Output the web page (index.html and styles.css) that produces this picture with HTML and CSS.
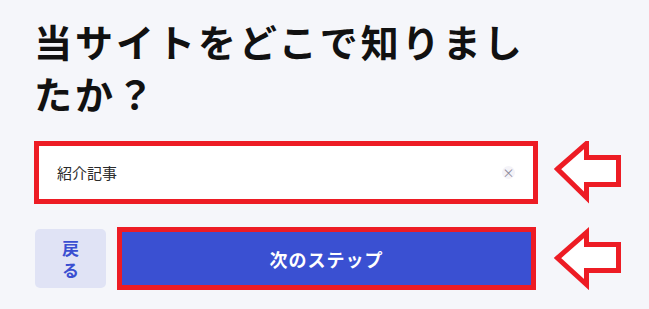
FILE: index.html
```html
<!DOCTYPE html>
<html lang="ja">
<head>
    <meta charset="UTF-8">
    <meta name="viewport" content="width=device-width, initial-scale=1.0">
    <title>当サイトをどこで知りましたか？</title>
    <link rel="stylesheet" href="styles.css">
</head>
<body>
    <main class="survey">
        <h1 class="question">当サイトをどこで知りましたか？</h1>

        <div class="row">
            <div class="select-field">
                <span class="select-value">紹介記事</span>
                <span class="clear-btn">×</span>
            </div>
            <svg class="pointer" width="80" height="63" viewBox="0 0 80 63">
                <path d="M9.5 28 L38.5 2.5 L38.5 16.5 L70.5 16.5 L70.5 43.5 L38.5 43.5 L38.5 56.5 Z"/>
            </svg>
        </div>

        <div class="row row-actions">
            <div class="actions">
                <button type="button" class="back-btn">戻る</button>
                <button type="button" class="next-btn">次のステップ</button>
            </div>
            <svg class="pointer" width="80" height="63" viewBox="0 0 80 63">
                <path d="M9.5 31 L38.5 5.5 L38.5 17.5 L70.5 17.5 L70.5 43.5 L38.5 43.5 L38.5 57.5 Z"/>
            </svg>
        </div>
    </main>
</body>
</html>
```

FILE: styles.css
```css
body {
    margin: 0;
    background-color: #f5f6fa;
    font-family: "Noto Sans CJK JP", "Noto Sans", sans-serif;
}
.survey {
    padding: 15px 0 0 34px;
}
.question {
    width: 504px;
    margin: 0 0 22px;
    font-size: 38px;
    font-weight: 700;
    line-height: 52px;
    letter-spacing: 3px;
    color: #111;
}
.row {
    display: flex;
    align-items: center;
    gap: 10px;
}
.row-actions {
    margin-top: 23px;
    gap: 12px;
}
.select-field {
    box-sizing: border-box;
    width: 504px;
    height: 63px;
    display: flex;
    align-items: center;
    justify-content: space-between;
    padding: 0 18px;
    background-color: #fff;
    border: 5px solid #ed1c24;
}
.select-value {
    font-size: 15px;
    color: #2b2b2b;
}
.clear-btn {
    width: 13px;
    height: 13px;
    line-height: 13px;
    text-align: center;
    border-radius: 50%;
    background-color: #f4f3f8;
    color: #8c8898;
    font-size: 12px;
}
.actions {
    width: 502px;
    display: flex;
    align-items: center;
    gap: 11px;
}
.back-btn {
    box-sizing: border-box;
    width: 71px;
    height: 59px;
    margin-left: 1px;
    padding: 0 19px;
    border: none;
    border-radius: 5px;
    background-color: #e0e3f5;
    color: #3a4fd1;
    font-family: inherit;
    font-size: 17px;
    font-weight: 700;
    line-height: 22px;
    cursor: pointer;
}
.next-btn {
    flex: 1;
    box-sizing: border-box;
    height: 63px;
    border: 5px solid #ed1c24;
    background-color: #3a50d2;
    color: #fff;
    font-family: inherit;
    font-size: 18px;
    font-weight: 700;
    letter-spacing: 1px;
    cursor: pointer;
}
.pointer path {
    fill: #fff;
    stroke: #ed1c24;
    stroke-width: 5;
    stroke-linejoin: miter;
}
```
